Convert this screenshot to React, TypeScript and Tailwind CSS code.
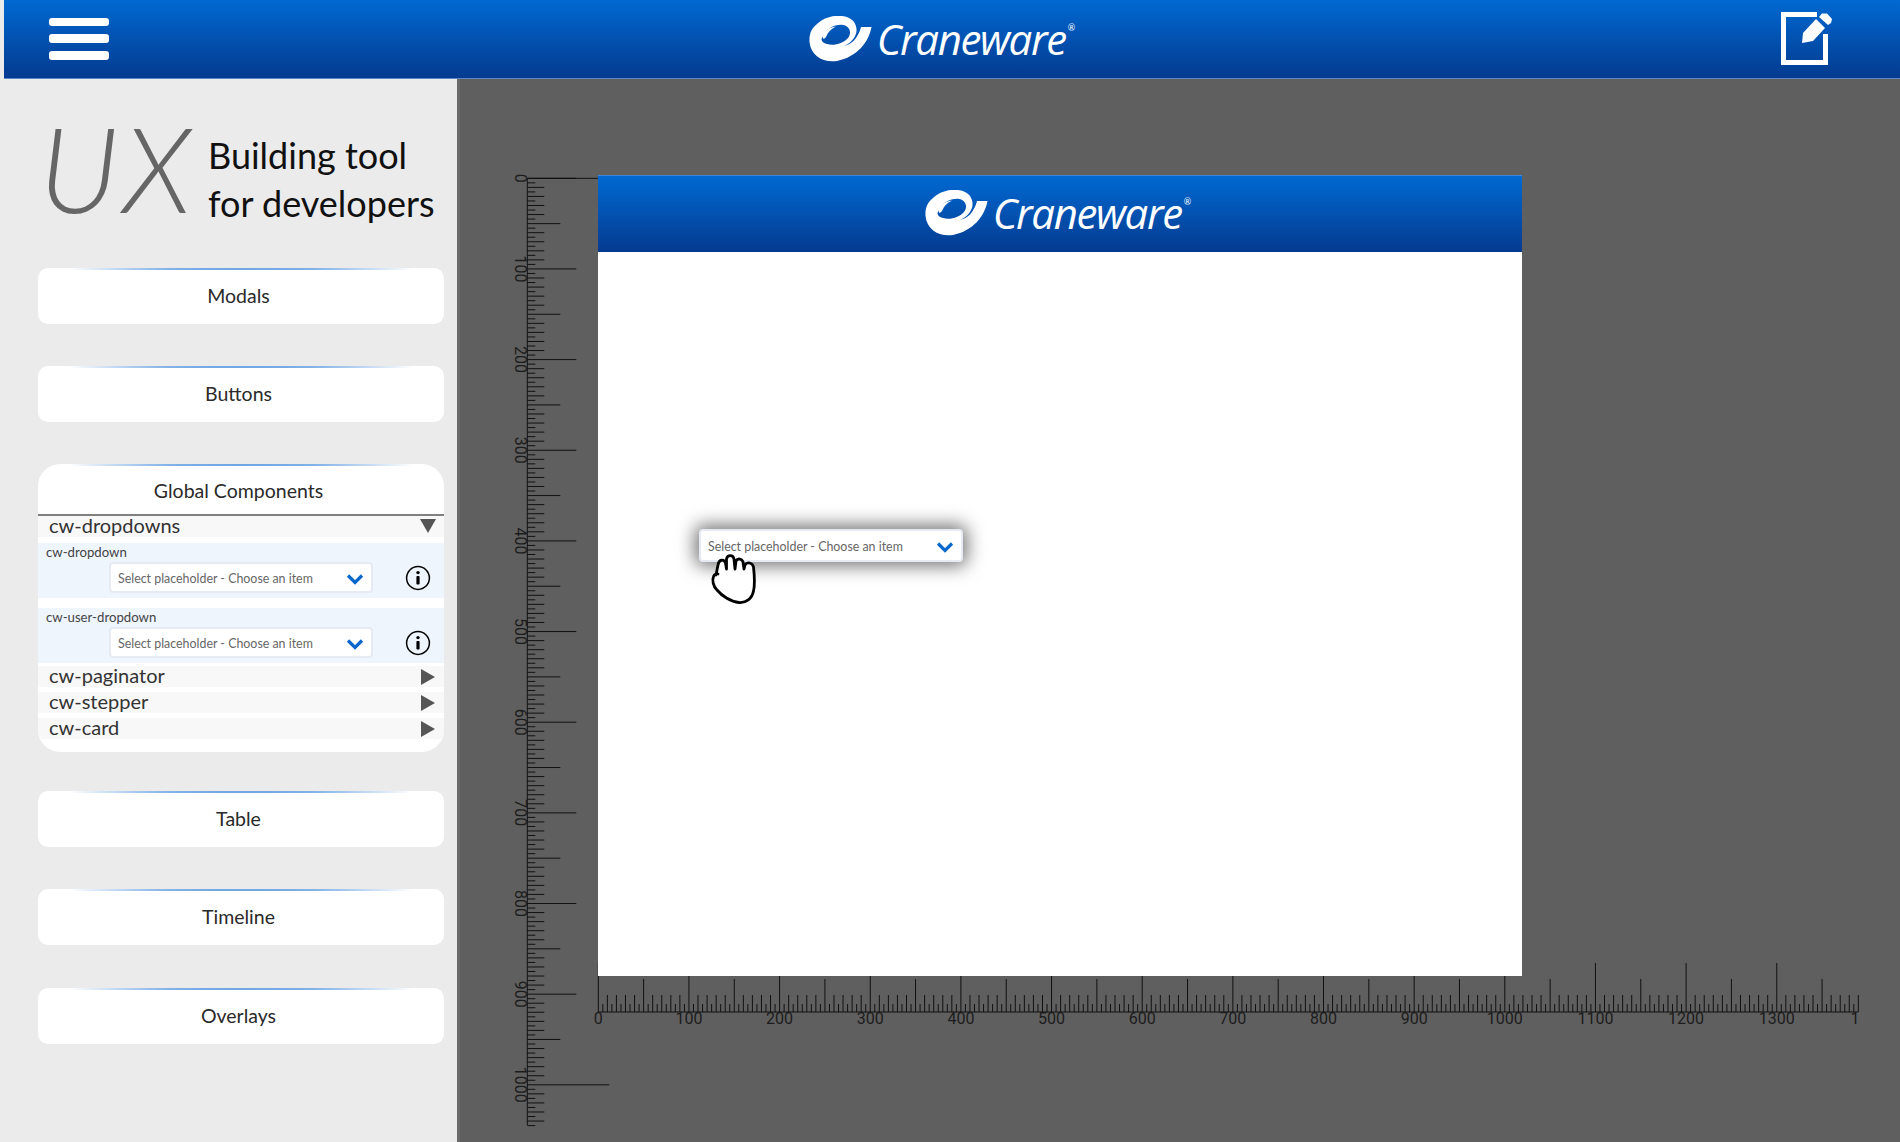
import React from 'react';

const FONT = { fontFamily: 'Lato, "Noto Sans", sans-serif' };

// Ruler scale: 100 units = 90.65px on screen
const SCALE = 0.9065;
const H_ORIGIN = 598.3;
const V_ORIGIN = 178.3;
const H_BASE = 1012;
const V_BASE = 527.3;

function tickLength(u: number) {
  if (u % 1000 === 0 && u > 0) return 82;
  if (u % 100 === 0) return 49;
  if (u % 50 === 0) return 33;
  if (u % 10 === 0) return 17;
  return 8;
}

function Rulers() {
  const hTicks: number[] = [];
  for (let u = 0; u <= 1390; u += 5) hTicks.push(u);
  const vTicks: number[] = [];
  for (let u = 0; u <= 1045; u += 5) vTicks.push(u);
  const hLabels = [0, 100, 200, 300, 400, 500, 600, 700, 800, 900, 1000, 1100, 1200, 1300];
  const vLabels = [0, 100, 200, 300, 400, 500, 600, 700, 800, 900, 1000];
  return (
    <svg className="absolute left-0 top-0" width="1900" height="1142" viewBox="0 0 1900 1142" style={{ fontFamily: 'Roboto, sans-serif' }}>
      <g stroke="#111" strokeWidth="1">
        <line x1={H_ORIGIN} y1={H_BASE} x2={1858} y2={H_BASE} />
        {hTicks.map((u) => {
          const x = H_ORIGIN + u * SCALE;
          return <line key={u} x1={x} y1={H_BASE} x2={x} y2={H_BASE - tickLength(u)} />;
        })}
        <line x1={V_BASE} y1={V_ORIGIN} x2={V_BASE} y2={1125} />
        {vTicks.map((u) => {
          const y = V_ORIGIN + u * SCALE;
          return <line key={u} x1={V_BASE} y1={y} x2={V_BASE + tickLength(u)} y2={y} />;
        })}
        <line x1={V_BASE} y1={V_ORIGIN} x2={598} y2={V_ORIGIN} />
      </g>
      <g fill="#1c1c1c" fontSize="16" textAnchor="middle">
        {hLabels.map((u) => (
          <text key={u} x={H_ORIGIN + u * SCALE} y={1024}>{u}</text>
        ))}
        <text x={1855} y={1024}>1</text>
        {vLabels.map((u) => (
          <text key={u} transform={`translate(515 ${V_ORIGIN + u * SCALE}) rotate(90)`}>{u}</text>
        ))}
      </g>
    </svg>
  );
}

function Logo() {
  return (
    <div className="flex items-center">
      <svg width="63" height="47" viewBox="0 0 63 47" className="shrink-0">
        <path
          fill="#fff"
          fillRule="evenodd"
          d="M8 8C14 2 24 -1 33 0C42 1 47 6 47.5 13C48 18 45 23 42 25.5C40 27.5 37 29 34.5 30C38 29.5 42 27.5 45 24.5C49 20 51 15 52 11H62.5C60 26 48 41 28 45C14 47 2 40 0.5 26C0 17 3 12 8 8ZM14 20C17 13 26 8 34 9C41 10 43 17 39 22C34 28 24 30 18 28C13 26.5 11 24 14 20Z"
        />
        <path d="M13.5 21C14 16 20 11 27 10.5C22 13 19 16 17.5 20C16 23 14 24 13.5 21Z" fill="#fff" />
      </svg>
      <span className="ml-[5px] text-[42px] font-medium italic leading-none tracking-[-1.4px] text-white" style={{ fontFamily: '"Open Sans", sans-serif' }}>
        Craneware
      </span>
      <span className="mb-[24px] ml-[2px] text-[9px] leading-none text-white" style={FONT}>®</span>
    </div>
  );
}

function Chevron() {
  return (
    <svg width="18" height="12" viewBox="0 0 18 12" className="shrink-0">
      <path d="M2 2.5 L9 9.5 L16 2.5" fill="none" stroke="#0a68cc" strokeWidth="3.2" />
    </svg>
  );
}

function Select({ className, shadow }: { className?: string; shadow?: boolean }) {
  return (
    <div
      className={`flex items-center justify-between rounded-[4px] border-2 border-[#e6eaf2] bg-white pl-[7px] pr-[7px] pt-[2px] ${shadow ? 'shadow-[0_0_18px_4px_rgba(0,0,0,0.55)]' : ''} ${className ?? ''}`}
    >
      <span className="pt-[1px] text-[12.4px] leading-none text-[#666]">Select placeholder - Choose an item</span>
      <Chevron />
    </div>
  );
}

function InfoIcon() {
  return (
    <svg width="26" height="26" viewBox="0 0 26 26" className="shrink-0">
      <circle cx="13" cy="13" r="11.4" fill="none" stroke="#000" strokeWidth="1.5" />
      <circle cx="13" cy="7.6" r="1.7" fill="#000" />
      <rect x="11.4" y="11" width="3.2" height="8.4" rx="1" fill="#000" />
    </svg>
  );
}

function TopGlow() {
  return <div className="absolute left-[20px] right-[20px] top-0 h-[2px] bg-[radial-gradient(ellipse_at_center,#2f7fd8_0%,rgba(47,127,216,0.6)_45%,rgba(47,127,216,0)_75%)]" />;
}

function NavButton({ label, className }: { label: string; className?: string }) {
  return (
    <div className={`relative flex h-[56px] w-[406px] items-center justify-center rounded-[10px] bg-white pr-[5px] text-[19.5px] text-[#2a2a2a] ${className ?? ''}`}>
      <TopGlow />
      {label}
    </div>
  );
}

function DropdownItem({ label }: { label: string }) {
  return (
    <div className="h-[55px] bg-[#eff5fd] pl-[8px] pr-[13px]">
      <div className="pt-[1px] pb-[1px] text-[13.2px] leading-[17px] text-[#444]">{label}</div>
      <div className="flex items-center justify-between pl-[63px]">
        <Select className="h-[31px] w-[264px]" />
        <InfoIcon />
      </div>
    </div>
  );
}

function AccordionRow({ label, open }: { label: string; open?: boolean }) {
  return (
    <div className={`flex h-[21px] items-center justify-between bg-[#f8f8f8] pl-[11px] text-[20px] leading-none text-[#333] ${open ? 'pr-[8px]' : 'pr-[9px]'}`}>
      <span className="pb-[3px]">{label}</span>
      {open ? (
        <svg width="16" height="14" viewBox="0 0 16 14" className="mb-[2px]"><path d="M0 0H16L8 14Z" fill="#555" /></svg>
      ) : (
        <svg width="14" height="16" viewBox="0 0 14 16"><path d="M0 0L14 8L0 16Z" fill="#555" /></svg>
      )}
    </div>
  );
}

function HandCursor() {
  return (
    <svg className="absolute left-[700px] top-[545px]" width="70" height="65" viewBox="0 0 70 65">
      <path
        d="M16 30L18 20C19 14 24 14 25.5 18L26.5 24L26.5 14C27.5 9.5 33 9.5 34 14L35 24L36 16C37.5 13 42 13.5 43 17L44 24L45 20C47 16.5 52.5 17.5 53.5 22C54.5 31 55 40 53.5 46C52 54 46 58 39 57.5C31 57 22 51 17 45C13 41 12 35 13.5 31.5C14.5 29 16 28.5 18 29"
        fill="#fff"
        stroke="#000"
        strokeWidth="2.8"
        strokeLinecap="round"
        strokeLinejoin="round"
      />
    </svg>
  );
}

export default function App() {
  return (
    <div className="relative flex h-[1142px] w-[1900px] flex-col overflow-hidden bg-[#ebebeb]" style={FONT}>
      {/* Top bar */}
      <div className="ml-[4px] flex h-[79px] shrink-0 items-center justify-between border-b border-[#5d86c4] bg-gradient-to-b from-[#0069d2] to-[#043b90] pl-[45px] pr-[67px]">
        <div className="flex w-[60px] flex-col gap-[8px]">
          <div className="h-[8px] rounded-[3px] bg-white" />
          <div className="h-[9px] rounded-[3px] bg-white" />
          <div className="h-[9px] rounded-[3px] bg-white" />
        </div>
        <div className="mr-[6px]">
          <Logo />
        </div>
        <svg width="52" height="54" viewBox="0 0 52 54">
          <path d="M36 2.5H2.5V50.5H44.5V22" fill="none" stroke="#fff" strokeWidth="5" />
          <path d="M22 21L35 7L44 16L32 29L21 31Z" fill="#fff" />
          <path d="M41 1.5H46L51 7L50 11L47 13L38 5Z" fill="#fff" />
        </svg>
      </div>

      <div className="flex min-h-0 flex-1">
        {/* Sidebar */}
        <div className="flex w-[460px] shrink-0 flex-col border-r-[3px] border-[#6b6b6b] pl-[38px]">
          <div className="flex h-[189px] items-center">
            <div className="mb-[12px] ml-[1px] w-[169px] text-[118px] font-light italic leading-none tracking-[4px] text-[#666]" style={{ fontFamily: 'Lato, sans-serif' }}>
              UX
            </div>
            <div className="pt-[11px] text-[36px] leading-[48px] text-[#111]">
              Building tool
              <br />
              for developers
            </div>
          </div>
          <NavButton label="Modals" />
          <NavButton label="Buttons" className="mt-[42px]" />
          {/* Global components accordion */}
          <div className="relative mt-[42px] h-[288px] w-[406px] overflow-hidden rounded-[22px] bg-white">
            <TopGlow />
            <div className="flex h-[52px] items-center justify-center border-b-2 border-[#808080] pr-[5px] pt-[4px] text-[19.5px] text-[#2a2a2a]">
              Global Components
            </div>
            <AccordionRow label="cw-dropdowns" open />
            <div className="h-[6px]" />
            <DropdownItem label="cw-dropdown" />
            <div className="h-[10px]" />
            <DropdownItem label="cw-user-dropdown" />
            <div className="flex flex-col gap-[5px] pt-[3px]">
              <AccordionRow label="cw-paginator" />
              <AccordionRow label="cw-stepper" />
              <AccordionRow label="cw-card" />
            </div>
          </div>
          <NavButton label="Table" className="mt-[39px]" />
          <NavButton label="Timeline" className="mt-[42px]" />
          <NavButton label="Overlays" className="mt-[43px]" />
        </div>

        {/* Canvas */}
        <div className="flex-1 bg-[#5f5f5f] pl-[138px] pt-[96px]">
          <Rulers />
          <div className="relative h-[801px] w-[924px] bg-white">
            <div className="flex h-[77px] items-center justify-center border-t border-[#3f86da] bg-gradient-to-b from-[#0069d2] to-[#043b90] pb-[2px] pr-[4px]">
              <Logo />
            </div>
          </div>
          <Select shadow className="absolute left-[699px] top-[529px] h-[33px] w-[264px]" />
          <HandCursor />
        </div>
      </div>
    </div>
  );
}
